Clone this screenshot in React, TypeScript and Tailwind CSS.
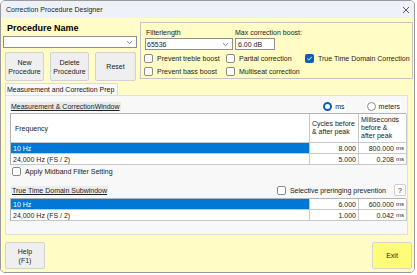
import React from 'react';

const Chevron: React.FC = () => (
  <svg width="7" height="5" viewBox="0 0 7 5" className="shrink-0">
    <path d="M1 1.2 L3.5 3.6 L6 1.2" fill="none" stroke="#606060" strokeWidth="0.8" />
  </svg>
);

const Check: React.FC<{ checked?: boolean; label: string; className?: string }> = ({ checked, label, className }) => (
  <div className={'flex items-center gap-[4px] ' + (className || '')}>
    {checked ? (
      <span className="w-[9px] h-[9px] rounded-[2px] bg-[#0a5fb4] flex items-center justify-center shrink-0">
        <svg width="7" height="7" viewBox="0 0 7 7">
          <path d="M1.3 3.6 L2.8 5 L5.8 1.8" fill="none" stroke="#fff" strokeWidth="0.9" />
        </svg>
      </span>
    ) : (
      <span className="w-[9px] h-[9px] rounded-[2px] border border-[#8a8a8a] bg-white shrink-0" />
    )}
    <span className="whitespace-nowrap">{label}</span>
  </div>
);

const Radio: React.FC<{ checked?: boolean; label: string }> = ({ checked, label }) => (
  <div className="flex items-center gap-[3px] bg-white px-[1px]">
    {checked ? (
      <span className="w-[9px] h-[9px] rounded-full border-[2.5px] border-[#0a5fb4] bg-white shrink-0" />
    ) : (
      <span className="w-[9px] h-[9px] rounded-full border border-[#8a8a8a] bg-white shrink-0" />
    )}
    <span>{label}</span>
  </div>
);

interface Row {
  freq: string;
  cycles: string;
  ms: string;
}

const GridRows: React.FC<{ rows: Row[] }> = ({ rows }) => (
  <>
    {rows.map((r, i) => (
      <React.Fragment key={r.freq}>
        <div
          className={
            'h-[11px] flex items-center pl-[2px] border-r border-b border-[#c8c8c8] ' +
            (i === 0 ? 'bg-[#0078d7] text-white' : 'bg-white')
          }
        >
          {r.freq}
        </div>
        <div className="h-[11px] flex items-center justify-end pr-[2px] border-r border-b border-[#c8c8c8] bg-white">
          {r.cycles}
        </div>
        <div className="h-[11px] flex items-center justify-end pr-[2px] border-r border-b border-[#c8c8c8] bg-white">
          {r.ms}
          <span className="text-[6px] ml-[2px]">ms</span>
        </div>
      </React.Fragment>
    ))}
  </>
);

export default function App() {
  const mainRows: Row[] = [
    { freq: '10 Hz', cycles: '8.000', ms: '800.000' },
    { freq: '24,000 Hz (FS / 2)', cycles: '5.000', ms: '0.208' },
  ];
  const subRows: Row[] = [
    { freq: '10 Hz', cycles: '6.000', ms: '600.000' },
    { freq: '24,000 Hz (FS / 2)', cycles: '1.000', ms: '0.042' },
  ];

  return (
    <div className="w-[417px] h-[275px] bg-white font-['Liberation_Sans',Arial,sans-serif] text-[7px] leading-none text-[#222]">
      <div className="w-[415px] h-[273px] rounded-[5px] border border-[#9a9a9a] overflow-hidden flex flex-col">
        {/* title bar */}
        <div className="h-[17px] bg-[#eef2f8] flex items-center justify-between pl-[5px] pr-[4px] shrink-0">
          <span className="text-[#222]">Correction Procedure Designer</span>
          <svg width="8" height="8" viewBox="0 0 8 8">
            <path d="M1 1 L7 7 M7 1 L1 7" stroke="#333" strokeWidth="0.8" />
          </svg>
        </div>

        <div className="flex-1 bg-[#fffcc6] flex flex-col">
          {/* top area */}
          <div className="flex pt-[4px] pl-[2px]">
            <div className="w-[134px]">
              <div className="h-[12px] flex items-center pl-[4px] text-[9px] font-bold text-black">Procedure Name</div>
              <div className="mt-[2px] h-[12px] bg-white border border-[#8f8f8f] flex items-center justify-end pr-[3px]">
                <Chevron />
              </div>
              <div className="mt-[4px] flex gap-[6px] pl-[2px]">
                <button className="w-[39px] h-[29px] bg-[#efefef] border border-[#d2d2d2] rounded-[2px] text-[7px] leading-[9px] text-[#222]">
                  New
                  <br />
                  Procedure
                </button>
                <button className="w-[39px] h-[29px] bg-[#efefef] border border-[#d2d2d2] rounded-[2px] text-[7px] leading-[9px] text-[#222]">
                  Delete
                  <br />
                  Procedure
                </button>
                <button className="w-[41px] h-[29px] bg-[#efefef] border border-[#d2d2d2] rounded-[2px] text-[7px] text-[#222]">
                  Reset
                </button>
              </div>
            </div>

            <div className="ml-[3px] w-[273px] h-[57px] border border-[#c6c6c0] pl-[3px] pt-[6px]">
              <div className="flex">
                <div className="w-[91px] pl-[2px]">
                  <div className="h-[8px]">Filterlength</div>
                  <div className="mt-[1px] h-[12px] w-[88px] -ml-[1px] bg-white border border-[#8f8f8f] flex items-center justify-between pl-[1px] pr-[3px]">
                    <span>65536</span>
                    <Chevron />
                  </div>
                </div>
                <div>
                  <div className="h-[8px]">Max correction boost:</div>
                  <div className="mt-[1px] h-[12px] w-[40px] bg-white border border-[#8f8f8f] flex items-center pl-[2px]">
                    6.00 dB
                  </div>
                </div>
              </div>
              <div className="mt-[4px] grid grid-cols-[82px_79px_100px] gap-y-[4px]">
                <Check label="Prevent treble boost" />
                <Check label="Partial correction" />
                <Check checked label="True Time Domain Correction" />
                <Check label="Prevent bass boost" />
                <Check label="Multiseat correction" />
              </div>
            </div>
          </div>

          {/* tab */}
          <div className="mt-[2px] ml-[4px] w-[113px] h-[12px] bg-[#f9f9f9] border border-b-0 border-[#dcdcdc] flex items-center pl-[1px] text-[#111]">
            Measurement and Correction Prep
          </div>
          <div className="ml-[4px] w-[403px] h-[140px] bg-[#f8f8f8] border border-[#e0e0e0] pl-[4px] pr-[1px]">
            <div className="mt-[5px] h-[10px] flex items-center justify-between pr-[5px]">
              <span className="underline bg-[#e9e9e9] px-[1px] py-[1px]">Measurement &amp; CorrectionWindow</span>
              <div className="flex gap-[20px]">
                <Radio checked label="ms" />
                <Radio label="meters" />
              </div>
            </div>
            <div className="mt-[2px] grid grid-cols-[299px_49px_48px] border-l border-t border-[#b4b4b4] bg-white">
              <div className="h-[29px] flex items-center pl-[4px] border-r border-b border-[#c8c8c8]">Frequency</div>
              <div className="h-[29px] flex items-center pl-[2px] border-r border-b border-[#c8c8c8] leading-[8px]">
                Cycles before
                <br />
                &amp; after peak
              </div>
              <div className="h-[29px] flex items-center pl-[2px] border-r border-b border-[#c8c8c8] leading-[8px]">
                Milliseconds
                <br />
                before &amp;
                <br />
                after peak
              </div>
              <GridRows rows={mainRows} />
            </div>
            <div className="mt-[1px] h-[10px] flex items-center pl-[2px]">
              <Check label="Apply Midband Filter Setting" />
            </div>
            <div className="mt-[8px] h-[12px] flex items-center justify-between">
              <span className="underline bg-[#ececec] px-[1px] py-[1px] ml-[1px]">True Time Domain Subwindow</span>
              <div className="flex items-center gap-[8px]">
                <Check label="Selective preringing prevention" />
                <button className="w-[12px] h-[12px] bg-[#fdfdfd] border border-[#cfcfcf] rounded-[2px] text-[7px]">?</button>
              </div>
            </div>
            <div className="mt-[2px] grid grid-cols-[299px_49px_48px] border-l border-t border-[#b4b4b4] bg-white">
              <GridRows rows={subRows} />
            </div>
          </div>

          {/* bottom buttons */}
          <div className="mt-[7px] flex justify-between pl-[4px] pr-[2px]">
            <button className="w-[40px] h-[27px] bg-[#efefef] border border-[#d2d2d2] rounded-[2px] text-[7px] leading-[9px] text-[#222]">
              Help
              <br />
              (F1)
            </button>
            <button className="w-[40px] h-[27px] bg-[#fdfd78] border border-[#d8d8c8] rounded-[2px] text-[7px] text-[#222]">
              Exit
            </button>
          </div>
        </div>
      </div>
    </div>
  );
}
